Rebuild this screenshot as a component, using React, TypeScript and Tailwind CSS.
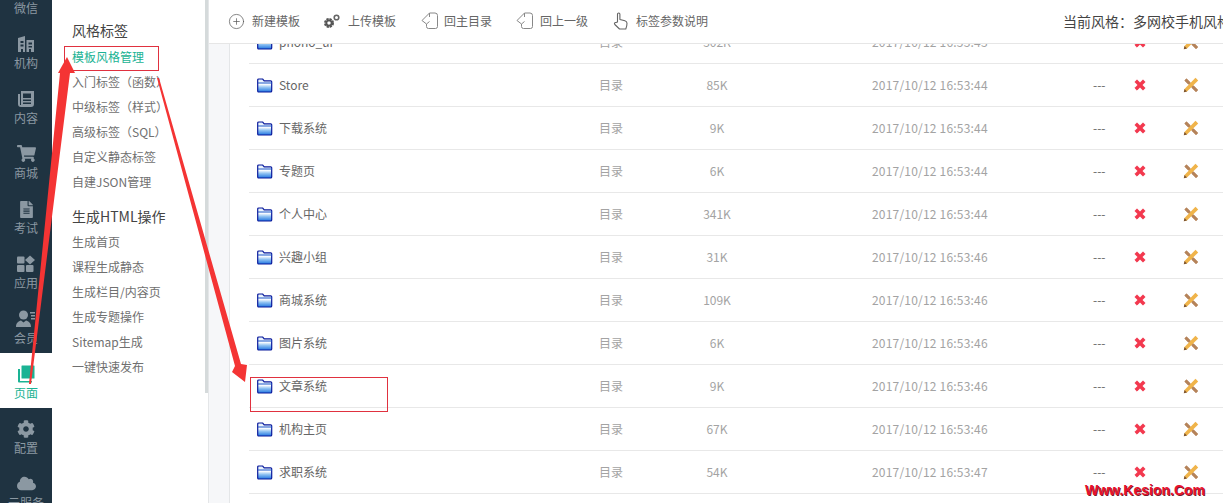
import React from 'react';
import { CirclePlus } from 'lucide-react';
import { FaCloud, FaCog, FaFileAlt, FaShoppingCart } from 'react-icons/fa';

const font = { fontFamily: '"Noto Sans CJK SC", "Liberation Sans", sans-serif' };

const BuildingIcon = () => (
  <svg width="18" height="18" viewBox="0 0 18 18" fill="currentColor">
    <path fillRule="evenodd" d="M1 17V3l7-2v16H6v-3H4v3H1zm2.500-11v2h3V6h-3zm0 3.500v2h3v-2h-3zM9.500 5H17v12h-3v-3h-2v3H9.500V5zm2 2.500v2h3.500v-2h-3.500zm0 3.500v1.500h3.500V11h-3.500z" />
  </svg>
);

const NewsIcon = () => (
  <svg width="18" height="18" viewBox="0 0 18 18" fill="currentColor">
    <path fillRule="evenodd" d="M3 1h14v13a3 3 0 0 1-3 3H4a3 3 0 0 1-3-3V4h2v11h1V1zm3 2.500V8h8V3.500H6zm0 6V11h8V9.500H6zm0 3V14h8v-1.500H6z" />
  </svg>
);

const AppsIcon = () => (
  <svg width="20" height="18" viewBox="0 0 20 18" fill="currentColor">
    <rect x="1" y="1.500" width="7.500" height="7" rx="1" />
    <rect x="1" y="10" width="7.500" height="7" rx="1" />
    <rect x="10" y="10" width="7.500" height="7" rx="1" />
    <path d="M14 0.500l5 4.500-5 4.500-5-4.500z" />
  </svg>
);

const MemberIcon = () => (
  <svg width="20" height="18" viewBox="0 0 20 18" fill="currentColor">
    <circle cx="7.500" cy="5" r="4.500" />
    <path d="M0 17c0-4 2.500-6 5-6.500l2.500 2 2.500-2c2.500.5 5 2.500 5 6.500z" />
    <rect x="14" y="2" width="5" height="1.500" />
    <rect x="15" y="5" width="4" height="1.500" />
    <rect x="15" y="8" width="4" height="1.500" />
  </svg>
);

const PagesIcon = () => (
  <svg width="18" height="18" viewBox="0 0 18 18" fill="currentColor">
    <rect x="4.500" y="0.500" width="13" height="13" rx="0.500" />
    <path d="M1 4h2v12h12v1.500H2A1 1 0 0 1 1 16.500z" />
  </svg>
);

const GearsIcon = () => (
  <svg width="18" height="16" viewBox="0 0 18 16">
    <circle cx="6" cy="10" r="3.500" fill="none" stroke="#555" strokeWidth="3" strokeDasharray="2 0.750" />
    <circle cx="6" cy="10" r="2.700" fill="none" stroke="#555" strokeWidth="1.800" />
    <circle cx="13.500" cy="4.500" r="2.300" fill="none" stroke="#666" strokeWidth="1.600" />
  </svg>
);

const BackDocIcon = () => (
  <svg width="18" height="18" viewBox="0 0 18 18" fill="none" stroke="#888" strokeWidth="1">
    <path d="M8.500 1h5.500a2.500 2.500 0 0 1 2.500 2.500v11a2 2 0 0 1-2 2H7.500a2 2 0 0 1-2-2V12" />
    <path d="M8.500 1L1 8.500 5.500 12 8.500 9.500" />
    <path d="M8.500 1v4" />
  </svg>
);

const HandIcon = () => (
  <svg width="16" height="19" viewBox="0 0 16 19" fill="none" stroke="#666" strokeWidth="1.100" strokeLinejoin="round">
    <path d="M4.500 10V2.200a1.200 1.200 0 0 1 2.400 0V7.500l5 1.300c1.300.4 2.100 1.200 2.100 2.500 0 2-.4 3.700-1.200 5.700H6.500L1.800 12.500c-.9-1-.1-2.300 1.200-1.900z" />
  </svg>
);

const FolderIcon = () => (
  <svg width="16" height="15" viewBox="0 0 16 15" className="shrink-0">
    <defs>
      <linearGradient id="fold" x1="0" y1="0" x2="0" y2="1">
        <stop offset="0" stopColor="#dcecfb" />
        <stop offset="0.400" stopColor="#ffffff" />
        <stop offset="0.650" stopColor="#8fc2f2" />
        <stop offset="1" stopColor="#1f74e0" />
      </linearGradient>
    </defs>
    <path d="M0.700 13V2a1 1 0 0 1 1-1h4l1.500 1.800h6.500a1 1 0 0 1 1 1V13a1 1 0 0 1-1 1H1.700a1 1 0 0 1-1-1z" fill="url(#fold)" stroke="#0a1a9c" strokeWidth="1.200" />
    <path d="M1 5h14" stroke="#1b56c8" strokeWidth="1" />
  </svg>
);

const DeleteIcon = () => (
  <svg width="12" height="12" viewBox="0 0 12 12" className="shrink-0">
    <path d="M3 0.800l3 3 3-3 2.200 2.200-3 3 3 3-2.200 2.200-3-3-3 3L0.800 9l3-3-3-3z" fill="#f4384e" stroke="#e8203a" strokeWidth="0.500" />
  </svg>
);

const ToolsIcon = () => (
  <svg width="16" height="16" viewBox="0 0 16 16" className="shrink-0">
    <path d="M1.500 3.500L3.500 1.500 15 13l-2 2z" fill="#b5835a" />
    <path d="M12.500 0.800L15.200 3.500 4 14.500 0.800 15.200l.7-3.200z" fill="#f0b44a" />
    <path d="M0.800 15.200l.7-3.200 2.500 2.500z" fill="#7a5230" />
    <path d="M1.500 3.500l2-2 3.500 3.500-2 2zM9 11l2-2 4 4-2 2z" fill="#b5835a" />
  </svg>
);

const navItems: { label: string; icon?: React.ReactNode; active?: boolean }[] = [
  { label: '机构', icon: <BuildingIcon /> },
  { label: '内容', icon: <NewsIcon /> },
  { label: '商城', icon: <FaShoppingCart size={19} /> },
  { label: '考试', icon: <FaFileAlt size={17} /> },
  { label: '应用', icon: <AppsIcon /> },
  { label: '会员', icon: <MemberIcon /> },
  { label: '页面', icon: <PagesIcon />, active: true },
  { label: '配置', icon: <FaCog size={18} /> },
  { label: '云服务', icon: <FaCloud size={19} /> },
];

const tagLinks = ['入门标签（函数）', '中级标签（样式）', '高级标签（SQL）', '自定义静态标签', '自建JSON管理'];
const buildLinks = ['生成首页', '课程生成静态', '生成栏目/内容页', '生成专题操作', 'Sitemap生成', '一键快速发布'];

const toolbar = [
  { label: '新建模板', icon: <CirclePlus size={17} strokeWidth={1} color="#555" />, cls: 'w-[95px] gap-[7px]' },
  { label: '上传模板', icon: <GearsIcon />, cls: 'w-[98px] gap-[7px]' },
  { label: '回主目录', icon: <BackDocIcon />, cls: 'w-[95px] gap-[5px]' },
  { label: '回上一级', icon: <BackDocIcon />, cls: 'w-[97px] gap-[6px]' },
  { label: '标签参数说明', icon: <HandIcon />, cls: 'w-[110px] gap-[7px]' },
];

const rows = [
  ['phono_ui', '302K', '2017/10/12 16:53:43'],
  ['Store', '85K', '2017/10/12 16:53:44'],
  ['下载系统', '9K', '2017/10/12 16:53:44'],
  ['专题页', '6K', '2017/10/12 16:53:44'],
  ['个人中心', '341K', '2017/10/12 16:53:44'],
  ['兴趣小组', '31K', '2017/10/12 16:53:46'],
  ['商城系统', '109K', '2017/10/12 16:53:46'],
  ['图片系统', '6K', '2017/10/12 16:53:46'],
  ['文章系统', '9K', '2017/10/12 16:53:46'],
  ['机构主页', '67K', '2017/10/12 16:53:46'],
  ['求职系统', '54K', '2017/10/12 16:53:47'],
];

export default function App() {
  return (
    <div className="relative flex h-[503px] w-[1223px] overflow-hidden bg-white text-xs" style={font}>
      {/* left icon rail */}
      <div className="flex w-[52px] shrink-0 flex-col bg-[#1f3341] text-[#8b98a2]">
        <div className="flex h-[18px] items-center justify-center text-[12px]">微信</div>
        <div className="flex flex-col pt-[7px]">
          {navItems.map((n) => (
            <div
              key={n.label}
              className={`flex h-[55px] flex-col items-center justify-start pt-[10px] ${n.active ? 'bg-white text-[#1ab394]' : ''}`}
            >
              <div className="flex h-[20px] items-end justify-center">{n.icon}</div>
              <div className="mt-[1px] whitespace-nowrap text-[12px] leading-[18px]">{n.label}</div>
            </div>
          ))}
        </div>
      </div>

      {/* second level menu */}
      <div className="relative w-[156px] shrink-0 bg-white pl-[20px] text-[#707070]">
        <div className="mt-[20px] text-[14px] leading-[20px] text-[#444]">风格标签</div>
        <div className="mt-[4px] h-[25px] text-[12px] leading-[25px] text-[#1ab394]">模板风格管理</div>
        {tagLinks.map((t) => (
          <div key={t} className="h-[25px] whitespace-nowrap text-[12px] leading-[25px]">{t}</div>
        ))}
        <div className="mt-[10px] h-[25px] text-[14px] leading-[25px] text-[#444]">生成HTML操作</div>
        {buildLinks.map((t) => (
          <div key={t} className="h-[25px] whitespace-nowrap text-[12px] leading-[25px]">{t}</div>
        ))}
        <div className="absolute right-0 top-0 h-[393px] w-[3px] bg-[#d5dadb]" />
      </div>

      {/* main */}
      <div className="flex min-w-0 flex-1 flex-col border-l border-[#e4e6e8]">
        <div className="z-10 flex h-[44px] shrink-0 items-center border-b border-[#e6e6e6] bg-white pb-[1px] pl-[19px] text-[#666]">
          {toolbar.map((t) => (
            <div key={t.label} className={`flex shrink-0 items-center whitespace-nowrap ${t.cls}`}>
              {t.icon}
              <span>{t.label}</span>
            </div>
          ))}
          <div className="ml-[340px] whitespace-nowrap text-[14px] text-[#444]">当前风格：多网校手机风格</div>
        </div>

        <div className="flex min-h-0 flex-1 overflow-hidden">
          <div className="w-[21px] shrink-0 border-r border-[#e4e6e8] bg-[#f6f7f9]" />
          <div className="min-w-0 flex-1 bg-white pl-[19px]">
            <div className="-mt-[23px]">
              {rows.map((r) => (
                <div key={r[0]} className="flex h-[43px] items-center border-b border-[#e8e8e8] pl-[8px] text-[#a3a3a3]">
                  <div className="flex w-[342px] shrink-0 items-center gap-[6px] text-[#666]">
                    <FolderIcon />
                    <span>{r[0]}</span>
                  </div>
                  <div className="w-[73px] shrink-0">目录</div>
                  <div className="w-[90px] shrink-0 text-center">{r[1]}</div>
                  <div className="w-[331px] shrink-0 whitespace-nowrap pl-[110px] tracking-[0.2px]">{r[2]}</div>
                  <div className="w-[41px] shrink-0 text-[#666]">---</div>
                  <div className="w-[49px] shrink-0"><DeleteIcon /></div>
                  <ToolsIcon />
                </div>
              ))}
            </div>
          </div>
        </div>
      </div>

      {/* annotations drawn over the screenshot */}
      <div className="absolute left-[64px] top-[46px] h-[25px] w-[95px] border border-[#e0313f]" />
      <div className="absolute left-[250px] top-[377px] h-[35px] w-[138px] border border-[#e0313f]" />
      <svg className="pointer-events-none absolute left-0 top-0" width="1223" height="503" viewBox="0 0 1223 503">
        <polygon points="67,57 75,73 70,73 31,384 29,384 60,73 58,73" fill="#f43434" />
        <polygon points="157,78 159,78 241,364 247,365 245,382 232,372 235,366" fill="#f43434" />
      </svg>
      <div
        className="absolute left-[1085px] top-[481px] whitespace-nowrap text-[14px] font-bold leading-[18px] text-[#e8112d] [text-shadow:1px_1px_0_#7a1a2a]"
        style={{ fontFamily: '"Liberation Sans", sans-serif' }}
      >
        Www.Kesion.Com
      </div>
    </div>
  );
}
